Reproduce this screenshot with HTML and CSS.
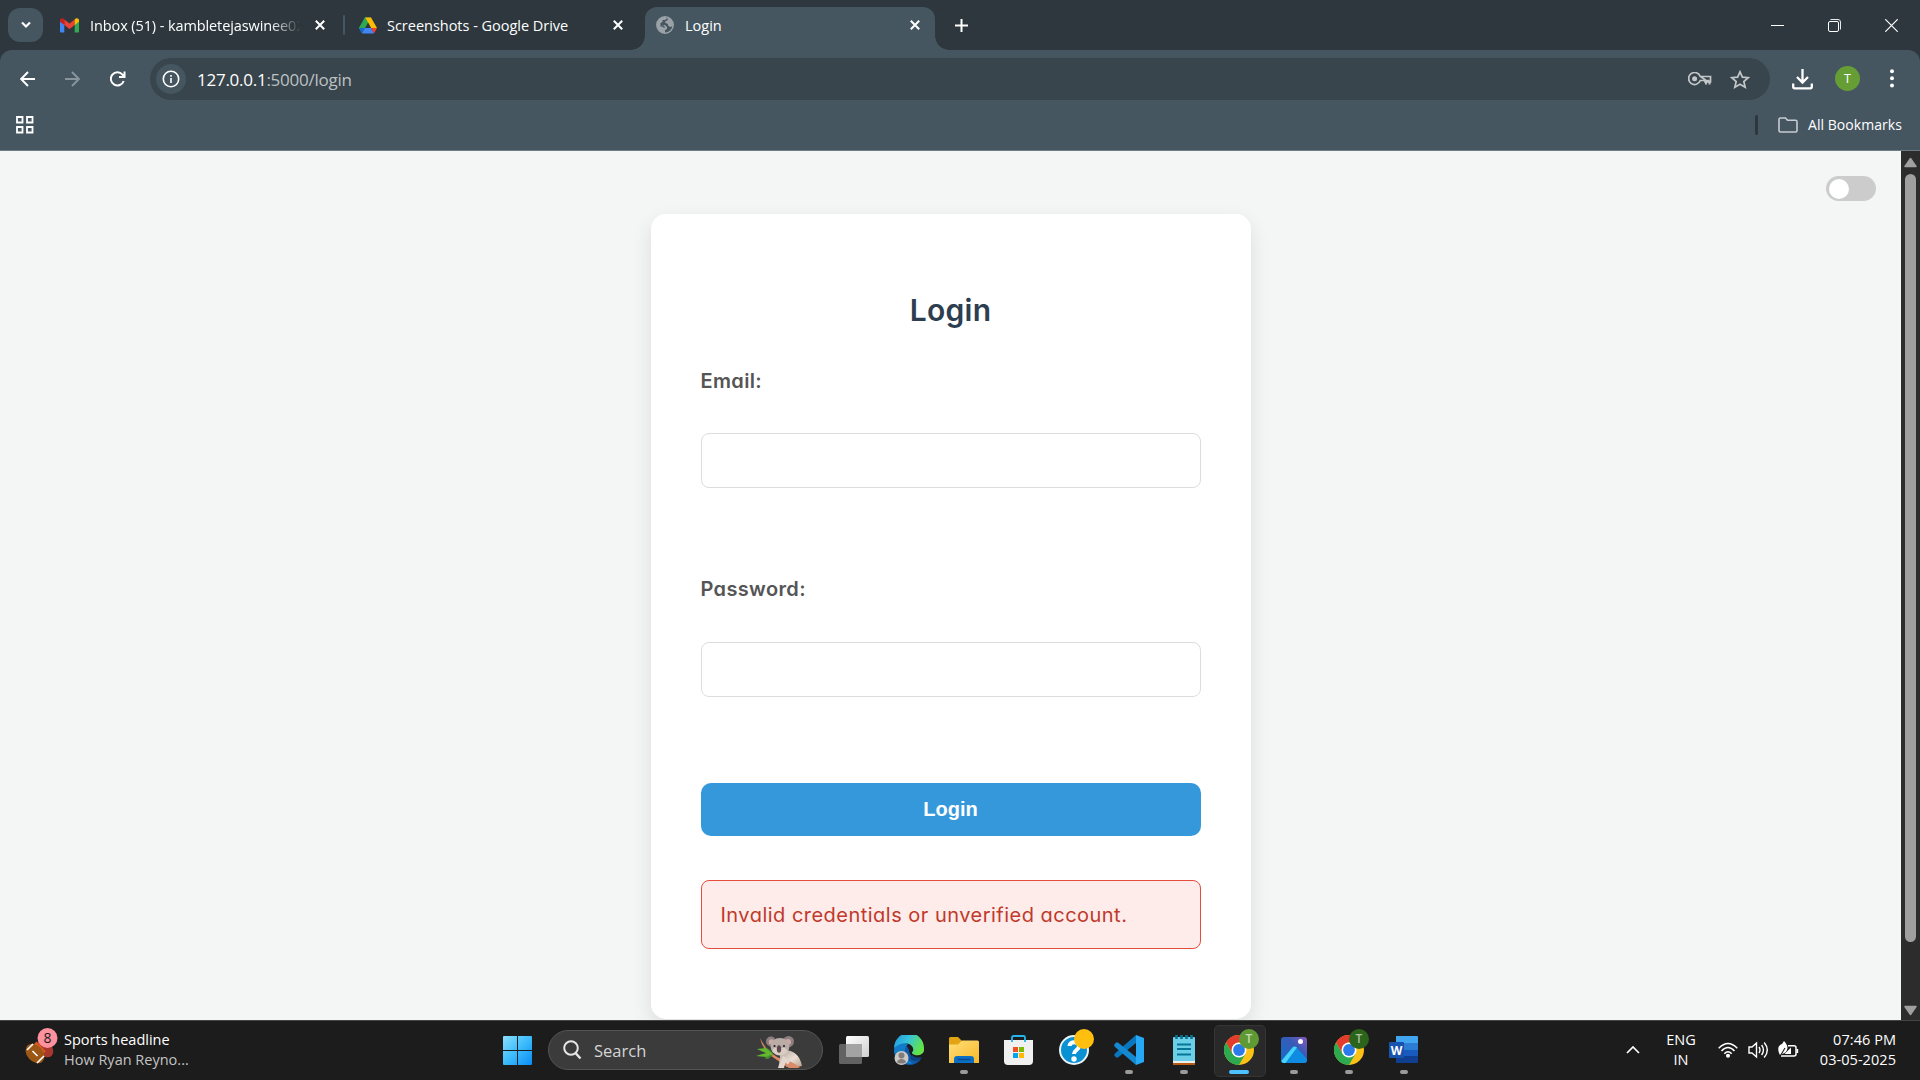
FILE: index.html
```html
<!DOCTYPE html>
<html lang="en">
<head>
<meta charset="utf-8">
<title>Login</title>
<link rel="stylesheet" href="styles.css">
</head>
<body>
<div class="desktop">
  <header class="tabstrip">
    <button class="tab-search"><svg width="12" height="8" viewBox="0 0 12 8"><path d="M2 1.5l4 4 4-4" fill="none" stroke="#fff" stroke-width="2.2"/></svg></button>
    <div class="tab tab-mail">
      <svg class="fav" width="19" height="15" viewBox="0 0 19 15"><path d="M0 3v10.500a1 1 0 0 0 1 1h3.300V6z" fill="#4285f4"/><path d="M19 3v10.500a1 1 0 0 1-1 1h-3.300V6z" fill="#34a853"/><path d="M4.300 1.500L9.500 5.500l5.200-4V7L9.500 11 4.300 7z" fill="#ea4335"/><path d="M0 2.500C0 .3 2.500-.4 4.300 1.200V7L0 3.800z" fill="#c5221f"/><path d="M19 2.500C19 .3 16.500-.4 14.700 1.200V7L19 3.800z" fill="#fbbc04"/></svg>
      <span class="tab-title faded">Inbox (51) - kambletejaswinee02</span>
      <svg class="x" width="10" height="10" viewBox="0 0 10 10"><path d="M.8.8l8.400 8.400M9.200.8L.8 9.200"/></svg>
    </div>
    <i class="tab-sep"></i>
    <div class="tab tab-drive">
      <svg class="fav" width="18" height="17" viewBox="0 0 18 17"><path d="M6 .5h6L3.500 15.500 0 11z" fill="#34a853"/><path d="M6 .5h6L18 11h-6z" fill="#fbbc04"/><path d="M9 5.500L6 11h6z" fill="#2d373d"/><path d="M0 11l6-10.500L9 5.500 3 16z" fill="#2da94f"/><path d="M0 11h6l-3 5.500z" fill="#1967d2"/><path d="M3 16.500L6 11h6l3 5.500z" fill="#4285f4"/><path d="M12 11h6l-3 5.500z" fill="#ea4335"/></svg>
      <span class="tab-title">Screenshots - Google Drive</span>
      <svg class="x" width="10" height="10" viewBox="0 0 10 10"><path d="M.8.8l8.400 8.400M9.200.8L.8 9.200"/></svg>
    </div>
    <div class="tab tab-active">
      <svg class="fav" width="18" height="18" viewBox="0 0 18 18"><circle cx="9" cy="9" r="8.200" fill="#46565f" stroke="#9ba2a8" stroke-width="1.500"/><path d="M1 8C2 3.500 5 1 9.500 1L11 2.500 9 4H6.500v2L4.500 7v2H9l2 2v2L9 14v3C4 17 1 13 1 8z" fill="#9ba2a8"/><path d="M11 1.500c4 1 6.200 4 6 8.500L14 11l-2-1.500V8L9.500 7 9 5.500 12 4z" fill="#9ba2a8"/><path d="M1.500 9.500L5 10l2 2v1l2 1v3C5 17 2 14 1.500 9.500z" fill="#9ba2a8"/><path d="M4.500 9.800l2.500.2 1.500 1.500" stroke="#46565f" stroke-width="1.400" fill="none"/></svg>
      <span class="tab-title">Login</span>
      <svg class="x" width="10" height="10" viewBox="0 0 10 10"><path d="M.8.8l8.400 8.400M9.200.8L.8 9.200"/></svg>
    </div>
    <svg class="plus" width="13" height="13" viewBox="0 0 13 13"><path d="M6.500 0v13M0 6.500h13" stroke="#fff" stroke-width="2"/></svg>
    <div class="win-controls">
      <svg width="13" height="13" viewBox="0 0 13 13"><path d="M0 6.500h13" stroke="#fff"/></svg>
      <svg width="13" height="13" viewBox="0 0 13 13"><path d="M2.500.5h7.500a2.500 2.500 0 0 1 2.500 2.500v7.500" fill="none" stroke="#e8eaeb"/><rect x=".5" y="2.500" width="10" height="10" rx="1.500" fill="none" stroke="#fff"/></svg>
      <svg width="13" height="13" viewBox="0 0 13 13"><path d="M.3.3l12.400 12.400M12.700.3L.3 12.700" stroke="#fff" stroke-width="1.200"/></svg>
    </div>
  </header>

  <div class="chrome-bars">
    <div class="toolbar">
      <svg class="nav-back" width="16" height="16" viewBox="0 0 16 16"><path d="M15 8H1.500M8 1L1.100 8l6.900 7" fill="none" stroke="#fff" stroke-width="2"/></svg>
      <svg class="nav-fwd" width="16" height="16" viewBox="0 0 16 16"><path d="M0 8H13.500M7 1l6.900 7-6.900 7" fill="none" stroke="#88949b" stroke-width="2"/></svg>
      <svg class="nav-reload" width="16" height="16" viewBox="0 0 16 16"><path d="M13.700 10A6.600 6.600 0 1 1 12.500 3.600l1.300 1.600M14.500 .5v5.500H9" fill="none" stroke="#fff" stroke-width="2"/></svg>
      <div class="omnibox">
        <span class="site-info"><svg width="18" height="18" viewBox="0 0 18 18"><circle cx="9" cy="9" r="7.700" fill="none" stroke="#fff" stroke-width="1.600"/><path d="M9 8v5M9 5v1.700" stroke="#fff" stroke-width="1.600"/></svg></span>
        <span class="url"><b>127.0.0.1</b>:5000/login</span>
        <svg class="key" width="24" height="14" viewBox="0 0 24 14"><path d="M12.300 4.500H22.500v5.300h-2.200v-2M20.300 9.800H17V8.500h-4.700A6 6 0 1 1 12.300 4.500z" fill="none" stroke="#c3c7ca" stroke-width="1.700"/><path d="M17 8.500h5.500v4h-2v-3h-1.500v3H17z" fill="#c3c7ca"/><circle cx="6.600" cy="6.800" r="2.500" fill="#c3c7ca"/></svg>
        <svg class="star" width="20" height="19" viewBox="0 0 20 19"><path d="M10 1.800l2.400 5.300 5.800.6-4.400 3.800 1.400 5.700-5.200-3-5.200 3 1.400-5.700-4.400-3.800 5.800-.6z" fill="none" stroke="#c3c7ca" stroke-width="1.700"/></svg>
      </div>
      <svg class="dl" width="21" height="21" viewBox="0 0 21 21"><path d="M10.500 0v13M5 8l5.500 5.500L16 8M1.200 14.500v3.300a1.500 1.500 0 0 0 1.500 1.500h15.600a1.500 1.500 0 0 0 1.500-1.500v-3.300" fill="none" stroke="#fff" stroke-width="2.300"/></svg>
      <span class="avatar">T</span>
      <svg class="dots" width="4" height="19" viewBox="0 0 4 19" fill="#fff"><circle cx="2" cy="2.200" r="2"/><circle cx="2" cy="9.300" r="2"/><circle cx="2" cy="16.400" r="2"/></svg>
    </div>
    <div class="bookmarks">
      <svg class="apps" width="18" height="18" viewBox="0 0 18 18" fill="none" stroke="#fff" stroke-width="1.800"><path d="M1 1h5.500v5.500H1zM11 1h5.500v5.500h-5.500zM1 11h5.500v5.500H1zM11 11h5.500v5.500h-5.500z"/></svg>
      <i class="bm-sep"></i>
      <svg class="folder" width="20" height="16" viewBox="0 0 20 16"><path d="M1 13.500v-11A1.500 1.500 0 0 1 2.500 1h5l2 2.300h8A1.500 1.500 0 0 1 19 4.800v8.700a1.500 1.500 0 0 1-1.500 1.500h-15A1.500 1.500 0 0 1 1 13.500z" fill="none" stroke="#c9cdd0" stroke-width="1.600"/></svg>
      <span class="bm-label">All Bookmarks</span>
    </div>
  </div>

  <div class="viewport">
    <main class="page">
      <form class="card">
        <h2>Login</h2>
        <label class="lbl-email">Email:</label>
        <input type="email">
        <label class="lbl-pass">Password:</label>
        <input type="password">
        <button type="button" class="submit">Login</button>
        <p class="error"><span>Invalid credentials or unverified account.</span></p>
      </form>
      <div class="toggle"><i></i></div>
    </main>
    <div class="scrollbar">
      <svg width="13" height="11" viewBox="0 0 13 11"><path d="M6.500 1.500L12 9.500H1z" fill="#a0a0a0" stroke="#a0a0a0" stroke-width="1.500" stroke-linejoin="round"/></svg>
      <i></i>
      <svg width="13" height="11" viewBox="0 0 13 11"><path d="M6.500 9.500L12 1.500H1z" fill="#a0a0a0" stroke="#a0a0a0" stroke-width="1.500" stroke-linejoin="round"/></svg>
    </div>
  </div>

  <footer class="taskbar">
    <svg width="0" height="0" class="defs"><defs>
      <linearGradient id="win" x1="0" y1="0" x2="1" y2="1"><stop offset="0" stop-color="#8be0fd"/><stop offset=".5" stop-color="#3cbcfb"/><stop offset="1" stop-color="#0a8cf5"/></linearGradient>
      <linearGradient id="edgeA" x1="0" y1="0" x2="1" y2=".4"><stop offset="0" stop-color="#1d94e0"/><stop offset=".5" stop-color="#36c3dc"/><stop offset="1" stop-color="#62e34a"/></linearGradient>
      <linearGradient id="gold" x1="0" y1="0" x2="1" y2="1"><stop offset="0" stop-color="#ffdf78"/><stop offset="1" stop-color="#f8b82a"/></linearGradient>
      <linearGradient id="photo" x1="0" y1="1" x2="1" y2="0"><stop offset="0" stop-color="#126fce"/><stop offset=".6" stop-color="#365bb7"/><stop offset="1" stop-color="#8657ba"/></linearGradient>
      <linearGradient id="grey" x1="0" y1="0" x2="1" y2="1"><stop offset="0" stop-color="#fff"/><stop offset="1" stop-color="#cfcfcf"/></linearGradient>
      <linearGradient id="fur" x1="0" y1="0" x2="1" y2="1"><stop offset="0" stop-color="#a99b98"/><stop offset=".55" stop-color="#eadfd4"/><stop offset="1" stop-color="#b49a88"/></linearGradient>
      <g id="chrome"><circle cx="15" cy="15" r="15" fill="#fbc116"/><path d="M2 7.500A15 15 0 0 1 28 7.500H15a7.500 7.500 0 0 0-6.500 3.800V18.700z" fill="#e33b2e"/><path d="M2 7.500A15 15 0 0 0 15 30l6.500-11.200H8.500z" fill="#2da94f"/><circle cx="15" cy="15" r="7.500" fill="#fff"/><circle cx="15" cy="15" r="5.900" fill="#2b7bea"/></g>
    </defs></svg>
    <div class="widget">
      <svg class="ball" width="36" height="42" viewBox="0 0 36 42"><ellipse cx="20" cy="22" rx="7" ry="9.500" transform="rotate(-45 20 22)" fill="#a8382e"/><path d="M10 16l9 10" stroke="#dd5a1f" stroke-width="4.500"/><ellipse cx="10" cy="26.500" rx="8" ry="11" transform="rotate(-42 10 26.500)" fill="#9c5714"/><path d="M2 23l6-6M12 36l7-7M7.500 24l5 5" stroke="#fff" stroke-width="1.600"/><circle cx="22.500" cy="11" r="10" fill="#fd919e"/><text x="22.500" y="16" text-anchor="middle" font-size="14" fill="#1b1b1b">8</text></svg>
      <div class="headline"><span class="h1">Sports headline</span><span class="h2">How Ryan Reyno...</span></div>
    </div>
    <svg class="start" width="29" height="29" viewBox="0 0 29 29"><path d="M1 0h13v14H0V1a1 1 0 0 1 1-1zM15 0h13a1 1 0 0 1 1 1v13H15zM0 15h14v14H1a1 1 0 0 1-1-1zM15 15h14v13a1 1 0 0 1-1 1H15z" fill="url(#win)"/></svg>
    <div class="search">
      <svg class="mag" width="19" height="20" viewBox="0 0 19 20"><circle cx="8" cy="8" r="6.800" fill="none" stroke="#e6e6e6" stroke-width="2"/><path d="M12.500 13l5 5.500" stroke="#e6e6e6" stroke-width="2.400"/></svg>
      <span class="search-label">Search</span>
      <svg class="koala" width="48" height="32" viewBox="0 0 48 32"><path d="M4 2c5 10 13 18 24 22l16 8H33L18 22C10 17 6 10 4 2z" fill="#dd8865"/><path d="M1 13l8-1 8 5-5 1zM0 20l10-3 7 1-6 3z" fill="#63b92e"/><path d="M6 9l8 5 4 5zM8 22l10-4-6 5z" fill="#43942d"/><path d="M24 15c10-3 20 2 22 15l-6 1-10-7-2 8h-6c2-6 2-11 2-17z" fill="url(#fur)"/><path d="M32 24l12 7H30z" fill="#d98b6b"/><circle cx="15" cy="5.500" r="5" fill="#8c7f83"/><circle cx="32.500" cy="5.500" r="5.500" fill="#8c7f83"/><circle cx="15.500" cy="6" r="2.700" fill="#d0a8a3"/><circle cx="32" cy="6" r="3" fill="#d0a8a3"/><ellipse cx="24" cy="10.500" rx="9.500" ry="8.500" fill="#b9aca7"/><path d="M16 15c4 6 12 6 16 0l-3-3H18z" fill="#d9ccc3"/><ellipse cx="23" cy="13" rx="2.200" ry="3.800" fill="#5c4650"/><circle cx="18.500" cy="10" r="1.100" fill="#272127"/><circle cx="28" cy="10" r="1.100" fill="#272127"/><path d="M25 31l3-8 5 4" fill="none" stroke="#e4d6cc" stroke-width="4"/></svg>
    </div>
    <div class="apps-row">
      <div class="app"><svg width="30" height="30" viewBox="0 0 30 30"><rect x="7" y="1" width="23" height="21" rx="1.500" fill="url(#grey)"/><rect x="0" y="9" width="23" height="20" rx="1.500" fill="#666" opacity=".95"/><path d="M7 9h16v13H7z" fill="#a3a3a3"/></svg></div>
      <div class="app"><svg width="30" height="30" viewBox="0 0 30 30"><path d="M0 15A15 15 0 0 0 15 30c5 0 9-2 12-6-6 1-12-3-12-9l-3-6z" fill="#1059a8"/><path d="M0 14C2 7 9 6 14 9c-5 4-5 15 5 19-8 3-19-2-19-14z" fill="#117dca"/><path d="M0 13A15 15 0 0 1 30 13c1 6-5 8-9 7-3-1-4-2-2-4C21 9 9 4 0 13z" fill="url(#edgeA)"/><path d="M18 20c3 3 7 3 10 2-3 5-9 5-12 1z" fill="#0d4484"/><circle cx="7.500" cy="23" r="7" fill="#ccc9c6"/><circle cx="7.500" cy="20.500" r="3" fill="#827d78"/><path d="M3 27c1-4 8-4 9 0-2 2-7 2-9 0z" fill="#827d78"/></svg></div>
      <div class="app run"><svg width="30" height="30" viewBox="0 0 30 30"><path d="M0 13V3.500A1.500 1.500 0 0 1 1.500 2H9l4 4-3 6z" fill="#e2a413"/><path d="M0 9.500h9l4-4h15.500A1.500 1.500 0 0 1 30 7v21H0z" fill="url(#gold)"/><path d="M5 28v-4a3 3 0 0 1 3-3h14a3 3 0 0 1 3 3v4z" fill="#0d6fc4"/><path d="M8.500 24.500h13" stroke="#064b90" stroke-width="1.500"/></svg></div>
      <div class="app"><svg width="30" height="30" viewBox="0 0 30 30"><path d="M0 5h29v21a4 4 0 0 1-4 4H4a4 4 0 0 1-4-4z" fill="#f0f0f0"/><path d="M8 7V2.500A1.500 1.500 0 0 1 9.500 1h10A1.500 1.500 0 0 1 21 2.500V7" fill="none" stroke="#23b5ee" stroke-width="1.800"/><path d="M9 12h5v5H9z" fill="#f25022"/><path d="M15 12h5v5h-5z" fill="#7fba00"/><path d="M9 18h5v5H9z" fill="#00a4ef"/><path d="M15 18h5v5h-5z" fill="#ffb900"/></svg></div>
      <div class="app"><svg width="30" height="30" viewBox="0 0 30 30"><circle cx="15" cy="15" r="14" fill="#0a91d3" stroke="#e9f4fa" stroke-width="2"/><path d="M10.500 11c0-5 9.500-5 9.500 0 0 4-5 4-5 8" fill="none" stroke="#fff" stroke-width="4"/><circle cx="15" cy="24" r="2.700" fill="#fff"/></svg><i class="badge yellow"></i></div>
      <div class="app run"><svg width="30" height="30" viewBox="0 0 30 30"><path d="M0 20l2 2.500h2L22 8V0L2 17.500z" fill="#0877bd"/><path d="M0 10l2-2.500h2L22 22v8L1 12z" fill="#1488d1"/><path d="M22 0l8 3v24l-8 3z" fill="#27a8f4"/></svg></div>
      <div class="app run"><svg width="30" height="30" viewBox="0 0 30 30"><path d="M4 26h22v4H4z" fill="#b65b17"/><path d="M4 25h22v3H4z" fill="#eee"/><rect x="4" y="2" width="22" height="24" rx="1" fill="#6bd0e7"/><path d="M8 9.500h14M8 14h14M8 19.500h14" stroke="#077696" stroke-width="1.800"/><path d="M7.500 0v4M12.500 0v4M17.500 0v4M22.500 0v4" stroke="#087292" stroke-width="2.600"/></svg></div>
      <div class="app run active"><svg width="30" height="30" viewBox="0 0 30 30"><use href="#chrome"/></svg><i class="badge light">T</i></div>
      <div class="app run"><svg width="30" height="30" viewBox="0 0 30 30"><rect x="2" y="2" width="26" height="26" rx="3" fill="url(#photo)"/><path d="M3 27L14 13q2-2 4 0l10 11v1q0 3-3 3H5z" fill="#0f8ce2"/><path d="M2.300 26L13.500 12.500q2-2 4.500 0L6.500 28H5q-2.500 0-2.700-2z" fill="#45d5fb"/><circle cx="21.500" cy="6.500" r="2.500" fill="#fff"/></svg></div>
      <div class="app run"><svg width="30" height="30" viewBox="0 0 30 30"><use href="#chrome"/></svg><i class="badge dark">T</i></div>
      <div class="app run"><svg width="30" height="30" viewBox="0 0 30 30"><path d="M7 1h21a1 1 0 0 1 1 1v6H7z" fill="#42a5ef"/><path d="M7 8h22v7H7z" fill="#2b7cd3"/><path d="M7 15h22v6H7z" fill="#185abd"/><path d="M7 21h22v6a1 1 0 0 1-1 1H7z" fill="#103f91"/><rect x="0" y="7" width="15" height="16" rx="1" fill="#1853b0"/><text x="7.500" y="19.500" text-anchor="middle" font-size="12" font-weight="700" fill="#fff">W</text></svg></div>
    </div>
    <div class="tray">
      <svg class="up" width="14" height="8" viewBox="0 0 14 8"><path d="M1 7l6-6 6 6" fill="none" stroke="#fff" stroke-width="1.700"/></svg>
      <div class="lang"><span>ENG</span><span>IN</span></div>
      <svg class="wifi" width="20" height="16" viewBox="0 0 20 16" fill="none" stroke="#fff" stroke-width="1.500"><path d="M.7 6.200q9.300-9.600 18.600 0M3.500 9q6.500-7 13 0M6.300 11.800q3.700-4 7.400 0"/><circle cx="10" cy="13.800" r="1.300" fill="#fff"/></svg>
      <svg class="vol" width="21" height="18" viewBox="0 0 21 18" fill="none" stroke="#fff" stroke-width="1.400"><path d="M1 6h3l4.500-4v14L4 12H1zM11 6q2 3 0 6M13.600 4q3.700 5 0 10M16.200 1.500q6.200 7.500 0 15"/></svg>
      <svg class="bat" width="21" height="18" viewBox="0 0 21 18"><path d="M10 4.700h6a2 2 0 0 1 2 2v6.300a2 2 0 0 1-2 2H3" fill="none" stroke="#fff" stroke-width="1.500"/><path d="M18.500 8h1.700v4h-1.700zM13 6.500V13H6.500z" fill="#fff"/><path d="M6 0c4 4 4.500 8 1.500 11.500L2 14C-1 9 0 4 4 3z" fill="#fff"/><path d="M1 17L7 7" stroke="#1c1c1c" stroke-width="1.100"/></svg>
      <div class="clock"><span class="t">07:46 PM</span><span class="d">03-05-2025</span></div>
    </div>
  </footer>
</div>
</body>
</html>
```
FILE: styles.css
```css
* { box-sizing: border-box; }
body { margin: 0; font-family: "Open Sans", "Noto Sans", sans-serif; overflow: hidden; }
svg { display: block; flex: none; }
i { font-style: normal; flex: none; }
.desktop { width: 1920px; height: 1080px; display: flex; flex-direction: column; background: #2d373d; }

/* Tab strip */
.tabstrip { height: 50px; display: flex; align-items: center; padding-left: 8px; color: #fff; font-size: 14.500px; }
.tab-search { width: 35px; height: 34px; border: 0; border-radius: 12px; background: #455660; padding: 0; display: flex; align-items: center; justify-content: center; }
.tab { display: flex; align-items: center; height: 50px; }
.tab-title { white-space: nowrap; overflow: hidden; flex: 1; line-height: 24px; padding-top: 1px; }
.x { fill: none; stroke: #fff; stroke-width: 2; }
.tab-mail { width: 265px; margin-left: 17px; }
.tab-mail .tab-title { margin: 0 15px 0 11px; letter-spacing: -0.100px; }
.faded { -webkit-mask-image: linear-gradient(90deg, #000 180px, transparent 211px); mask-image: linear-gradient(90deg, #000 180px, transparent 211px); }
.tab-sep { width: 2px; height: 20px; margin-left: 18px; background: #455660; border-radius: 1px; }
.tab-drive { width: 264px; margin-left: 14px; }
.tab-drive .tab-title { margin-left: 10px; letter-spacing: -0.020px; }
.tab-active { position: relative; width: 290px; height: 43px; margin: 7px 0 0 22px; padding: 0 15px 7px 11px; border-radius: 12px 12px 0 0; background: #455660; }
.tab-active .tab-title { margin-left: 11px; letter-spacing: 0; }
.tab-active::before, .tab-active::after { content: ""; position: absolute; bottom: 0; width: 14px; height: 14px; }
.tab-active::before { left: -14px; background: radial-gradient(circle at 0 0, transparent 13.500px, #455660 14px); }
.tab-active::after { right: -14px; background: radial-gradient(circle at 100% 0, transparent 13.500px, #455660 14px); }
.plus { margin-left: 20px; }
.win-controls { margin-left: auto; margin-right: 22px; display: flex; gap: 44px; }

/* Toolbar and bookmarks */
.chrome-bars { height: 101px; background: #455660; border-radius: 12px 12px 0 0; border-bottom: 1px solid #6d7b85; }
.toolbar { height: 58px; display: flex; align-items: center; padding-left: 20px; }
.nav-fwd, .nav-reload { margin-left: 29px; }
.omnibox { width: 1620px; height: 42px; margin-left: 24px; border-radius: 21px; background: #39454c; display: flex; align-items: center; padding: 0 20px 0 6px; }
.site-info { width: 30px; height: 30px; border-radius: 15px; background: #455660; display: flex; align-items: center; justify-content: center; }
.url { margin-left: 11px; font-size: 17px; color: #bcc1c4; letter-spacing: -0.260px; flex: 1; }
.url b { font-weight: 400; color: #fff; }
.star { margin-left: 18px; }
.dl { margin-left: 22px; }
.avatar { width: 25px; height: 25px; margin-left: 22px; margin-top: -1px; border-radius: 50%; background: #669e35; color: #fff; font-size: 12.500px; line-height: 25px; text-align: center; }
.dots { margin-left: 30px; margin-top: -1px; }
.bookmarks { height: 34px; display: flex; align-items: center; padding: 0 18px 0 16px; color: #fff; }
.bm-sep { width: 3px; height: 20px; margin-left: auto; border-radius: 2px; background: #2d373d; }
.folder { margin: 0 10px 0 20px; }
.bm-label { width: 94px; margin-top: -2px; font-size: 14px; letter-spacing: 0.050px; white-space: nowrap; }

/* Page */
.viewport { height: 869px; display: flex; overflow: hidden; }
.page { position: relative; flex: 1; background: #f4f6f6; padding-top: 63px; overflow: hidden; }
.card { width: 600px; height: 805px; margin: 0 auto; padding: 0 50px; border-radius: 15px; background: #fff; box-shadow: 0 8px 20px rgba(0,0,0,.1); display: flex; flex-direction: column; font-family: Inter, sans-serif; font-feature-settings: "cv11"; }
.card h2 { margin: 74px 0 0; height: 45px; line-height: 45px; font-size: 30px; font-weight: 600; letter-spacing: 0.300px; color: #2c3e50; text-align: center; }
.card label { height: 30px; line-height: 30px; font-size: 20px; font-weight: 600; letter-spacing: 0.350px; color: #555; white-space: nowrap; }
.lbl-email { margin-top: 33px; }
.lbl-pass { margin-top: 86px; }
.card input { width: 500px; height: 55px; flex: none; margin-top: 37px; border: 1px solid #ddd; border-radius: 8px; background: #fff; outline: 0; }
.lbl-pass + input { margin-top: 38px; }
.submit { height: 53px; margin-top: 86px; border: 0; border-radius: 10px; background: #3498db; color: #fff; font: bold 20px "Liberation Sans", Arial, sans-serif; }
.error { height: 69px; margin: 44px 0 0; padding-left: 19px; border: 1px solid #e74c3c; border-radius: 8px; background: #fdecea; color: #c0392b; font-size: 20px; letter-spacing: 0.480px; line-height: 68px; white-space: nowrap; }
.toggle { position: absolute; top: 25px; right: 25px; width: 50px; height: 25px; border-radius: 13px; background: #ccc; padding: 3px; }
.toggle i { display: block; width: 20px; height: 20px; border-radius: 50%; background: #fff; }
.scrollbar { width: 19px; background: #2c2c2c; display: flex; flex-direction: column; align-items: center; padding: 6px 0 4px; }
.scrollbar i { width: 11px; height: 768px; margin: 6px 0 auto; border-radius: 6px; background: #9f9f9f; }

/* Taskbar */
.taskbar { height: 60px; background: #1c1c1c; box-shadow: inset 0 1px #444; display: flex; align-items: center; color: #fff; }
.defs { position: absolute; }
.widget { width: 503px; height: 60px; display: flex; align-items: center; padding-left: 25px; }
.ball { margin-top: -5px; }
.headline { margin-left: 3px; display: flex; flex-direction: column; line-height: 20px; font-size: 14.500px; white-space: nowrap; }
.headline .h2 { color: #c3c3c3; }
.search { width: 275px; height: 40px; margin-left: 16px; border: 1px solid #545454; border-radius: 20px; background: #3b3b3b; display: flex; align-items: center; padding: 0 18px 0 14px; }
.search-label { margin-left: 12px; flex: 1; font-size: 16.500px; color: #d5d5d5; }
.koala { margin-top: 3px; }
.apps-row { display: flex; margin-left: 3px; }
.app { position: relative; width: 55px; height: 60px; display: flex; align-items: center; justify-content: center; }
.app > svg { position: relative; }
.app.run::after { content: ""; position: absolute; left: 23.500px; bottom: 6px; width: 8px; height: 4px; border-radius: 2px; background: #9a9a9a; }
.app.active::before { content: ""; position: absolute; left: 2.500px; top: 5px; width: 50px; height: 50px; border: 1px solid #353535; border-radius: 5px; background: #292929; }
.app.active::after { left: 17.500px; width: 20px; background: #4cc2ff; }
.badge { position: absolute; left: 28px; top: 9px; width: 20px; height: 20px; border-radius: 50%; font-size: 12px; font-weight: 600; line-height: 20px; text-align: center; }
.yellow { background: #ffbf0f; }
.light { background: #5f9934; color: #c5d9b6; }
.dark { background: #2c641c; color: #a9c19f; }
.tray { margin-left: auto; padding-right: 24px; display: flex; align-items: center; font-size: 14.500px; line-height: 20px; white-space: nowrap; }
.lang { width: 30px; margin-left: 26px; display: flex; flex-direction: column; align-items: center; }
.wifi { margin-left: 22px; }
.vol { margin-left: 10px; }
.bat { margin-left: 9px; }
.clock { width: 78px; margin-left: 19px; display: flex; flex-direction: column; align-items: flex-end; letter-spacing: 0.050px; }
```
